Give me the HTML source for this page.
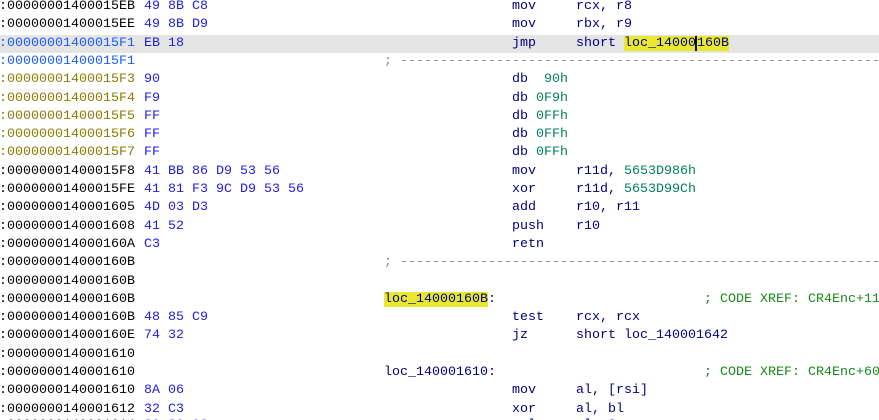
<!DOCTYPE html>
<html><head><meta charset="utf-8"><style>
html,body{margin:0;padding:0;background:#fff;width:879px;height:420px;overflow:hidden}
body{font-family:"Liberation Mono",monospace;font-size:13.33px;position:relative}
.w{position:absolute;left:0;top:1px;width:879px;height:440px}
.r{position:absolute;left:0;width:879px;height:18.3px;line-height:18.3px;white-space:pre}
.r span{position:absolute;top:0}
.a{left:-1px;color:#000}
.ab{color:#1a5cff}
.ao{color:#8a7a00}
.b{left:144px;color:#2020e0}
.m{left:512px;color:#000080}
.o{left:576px;color:#000080}
.n{color:#008060}
.l{left:384px;color:#000080}
.c{left:704px;color:#1a8a1a}
.sep{left:384px;color:#888}
.hl{background:#e4e4e4}
.y{background:#e8e830}
</style></head><body><div class="w">
<div class="r" style="top:-3px"><span class="a">:00000001400015EB</span><span class="b">49 8B C8</span><span class="m">mov</span><span class="o">rcx, r8</span></div>
<div class="r" style="top:15.3px"><span class="a">:00000001400015EE</span><span class="b">49 8B D9</span><span class="m">mov</span><span class="o">rbx, r9</span></div>
<div class="r hl" style="top:33.6px"><span class="a ab">:00000001400015F1</span><span class="b">EB 18</span><span class="m">jmp</span><span class="o">short <span class="y" style="position:static">loc_14000<span style="position:static;border-left:2px solid #000;margin-left:-1px">1</span>60B</span></span></div>
<div class="r" style="top:51.9px"><span class="a ab">:00000001400015F1</span><span class="sep">; -------------------------------------------------------------</span></div>
<div class="r" style="top:70.2px"><span class="a ao">:00000001400015F3</span><span class="b">90</span><span class="m">db  <span class="n" style="position:static">90h</span></span></div>
<div class="r" style="top:88.5px"><span class="a ao">:00000001400015F4</span><span class="b">F9</span><span class="m">db <span class="n" style="position:static">0F9h</span></span></div>
<div class="r" style="top:106.8px"><span class="a ao">:00000001400015F5</span><span class="b">FF</span><span class="m">db <span class="n" style="position:static">0FFh</span></span></div>
<div class="r" style="top:125.1px"><span class="a ao">:00000001400015F6</span><span class="b">FF</span><span class="m">db <span class="n" style="position:static">0FFh</span></span></div>
<div class="r" style="top:143.4px"><span class="a ao">:00000001400015F7</span><span class="b">FF</span><span class="m">db <span class="n" style="position:static">0FFh</span></span></div>
<div class="r" style="top:161.7px"><span class="a">:00000001400015F8</span><span class="b">41 BB 86 D9 53 56</span><span class="m">mov</span><span class="o">r11d, <span class="n" style="position:static">5653D986h</span></span></div>
<div class="r" style="top:180px"><span class="a">:00000001400015FE</span><span class="b">41 81 F3 9C D9 53 56</span><span class="m">xor</span><span class="o">r11d, <span class="n" style="position:static">5653D99Ch</span></span></div>
<div class="r" style="top:198.3px"><span class="a">:0000000140001605</span><span class="b">4D 03 D3</span><span class="m">add</span><span class="o">r10, r11</span></div>
<div class="r" style="top:216.6px"><span class="a">:0000000140001608</span><span class="b">41 52</span><span class="m">push</span><span class="o">r10</span></div>
<div class="r" style="top:234.9px"><span class="a">:000000014000160A</span><span class="b">C3</span><span class="m">retn</span></div>
<div class="r" style="top:253.2px"><span class="a">:000000014000160B</span><span class="sep">; -------------------------------------------------------------</span></div>
<div class="r" style="top:271.5px"><span class="a">:000000014000160B</span></div>
<div class="r" style="top:289.8px"><span class="a">:000000014000160B</span><span class="l"><span class="y" style="position:static">loc_14000160B</span>:</span><span class="c">; CODE XREF: CR4Enc+11</span></div>
<div class="r" style="top:308.1px"><span class="a">:000000014000160B</span><span class="b">48 85 C9</span><span class="m">test</span><span class="o">rcx, rcx</span></div>
<div class="r" style="top:326.4px"><span class="a">:000000014000160E</span><span class="b">74 32</span><span class="m">jz</span><span class="o">short loc_140001642</span></div>
<div class="r" style="top:344.7px"><span class="a">:0000000140001610</span></div>
<div class="r" style="top:363px"><span class="a">:0000000140001610</span><span class="l">loc_140001610:</span><span class="c">; CODE XREF: CR4Enc+60</span></div>
<div class="r" style="top:381.3px"><span class="a">:0000000140001610</span><span class="b">8A 06</span><span class="m">mov</span><span class="o">al, [rsi]</span></div>
<div class="r" style="top:399.6px"><span class="a">:0000000140001612</span><span class="b">32 C3</span><span class="m">xor</span><span class="o">al, bl</span></div>
<div class="r" style="top:415.5px"><span class="a">:0000000140001614</span><span class="b">C0 C0 03</span><span class="m">rol</span><span class="o">al, 3</span></div>
</div></body></html>
